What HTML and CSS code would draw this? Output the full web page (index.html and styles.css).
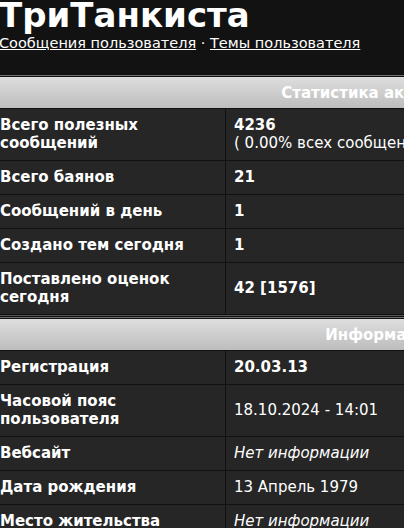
FILE: index.html
```html
<!DOCTYPE html>
<html lang="ru">
<head>
<meta charset="utf-8">
<title>ТриТанкиста</title>
<link rel="stylesheet" href="styles.css">
</head>
<body>
<div class="page">
  <div class="sheet">
    <div class="profile-head">
      <h1 class="nick">ТриТанкиста</h1>
      <div class="links"><a href="#">Сообщения пользователя</a> · <a href="#">Темы пользователя</a></div>
    </div>

    <section class="block">
      <table class="info">
        <tr><th colspan="2">Статистика активности</th></tr>
        <tr><td class="lbl">Всего полезных<br>сообщений</td><td class="val"><b>4236</b><br>( 0.00% всех сообщений )</td></tr>
        <tr><td class="lbl">Всего баянов</td><td class="val"><b>21</b></td></tr>
        <tr><td class="lbl">Сообщений в день</td><td class="val"><b>1</b></td></tr>
        <tr><td class="lbl">Создано тем сегодня</td><td class="val"><b>1</b></td></tr>
        <tr><td class="lbl">Поставлено оценок<br>сегодня</td><td class="val"><b>42 [1576]</b></td></tr>
      </table>
    </section>

    <section class="block">
      <table class="info">
        <tr><th colspan="2">Информация</th></tr>
        <tr><td class="lbl">Регистрация</td><td class="val"><b>20.03.13</b></td></tr>
        <tr><td class="lbl">Часовой пояс<br>пользователя</td><td class="val">18.10.2024 - 14:01</td></tr>
        <tr><td class="lbl">Вебсайт</td><td class="val"><i>Нет информации</i></td></tr>
        <tr><td class="lbl">Дата рождения</td><td class="val">13 Апрель 1979</td></tr>
        <tr><td class="lbl">Место жительства</td><td class="val"><i>Нет информации</i></td></tr>
      </table>
    </section>
  </div>
</div>
</body>
</html>
```
FILE: styles.css
```css
html, body {
  margin: 0;
  padding: 0;
  background: #121212;
}
body {
  font-family: "DejaVu Sans", Verdana, sans-serif;
  color: #ffffff;
}
.page {
  width: 404px;
  height: 528px;
  overflow: hidden;
}
.sheet {
  width: 779px;
  margin-left: -8px;
}
.profile-head {
  padding-left: 7px;
  margin-bottom: 23px;
}
.nick {
  margin: -3px 0 0 0;
  font-size: 34px;
  line-height: 37px;
  font-weight: bold;
  color: #ffffff;
}
.links {
  font-size: 14.5px;
  line-height: 18px;
  color: #ffffff;
}
.links a {
  color: #ffffff;
  text-decoration: underline;
}
.block {
  border-top: 1px solid #6e6e6e;
  padding-top: 1px;
  border-bottom: 1px solid #555555;
  margin-bottom: 1px;
}
.info {
  width: 100%;
  border-collapse: collapse;
  background: #262626;
}
.info th {
  height: 31px;
  padding: 0;
  background: linear-gradient(#dedede, #bdbdbd);
  color: #ffffff;
  font-size: 15px;
  font-weight: bold;
  text-align: center;
  border-bottom: 1px solid #111111;
}
.info td {
  padding: 7px 8px 8px 8px;
  font-size: 15px;
  line-height: 18px;
  vertical-align: middle;
  border-bottom: 1px solid #111111;
}
.info td.lbl {
  width: 217px;
  font-weight: bold;
  border-right: 1px solid #111111;
}
.info td.val {
  font-weight: normal;
}
```
